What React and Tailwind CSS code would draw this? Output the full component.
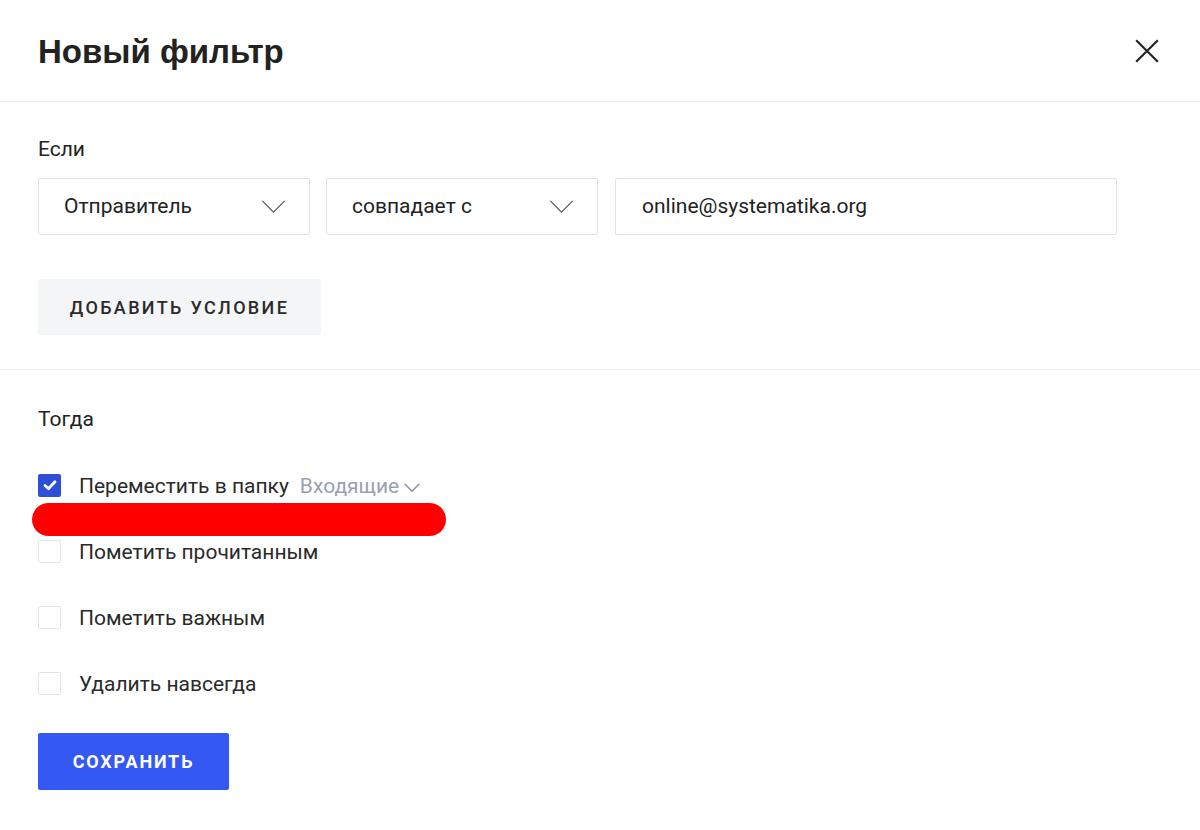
import React from 'react';

const Chevron = ({ className, width = 1.3 }) => (
  <svg className={className} viewBox="0 0 26 14" fill="none" stroke="currentColor" strokeWidth={width}>
    <path d="M1 1 L13 13 L25 1" />
  </svg>
);

const Select = ({ label, width }) => (
  <div className={`${width} h-[57px] border border-[#e1e2e6] rounded-[2px] flex items-center justify-between pl-[25px] pr-[23px]`}>
    <span className="text-[21px] text-[#222]">{label}</span>
    <Chevron className="w-[25px] h-[13px] text-[#555]" />
  </div>
);

const CheckRow = ({ checked, children }) => (
  <div className="flex items-center h-[24px]">
    {checked ? (
      <div className="w-[23px] h-[23px] rounded-[2px] bg-[#2f4fd6] flex items-center justify-center">
        <svg viewBox="0 0 16 16" className="w-[16px] h-[16px]" fill="none" stroke="white" strokeWidth="2.8" strokeLinecap="round" strokeLinejoin="round">
          <path d="M3 8.5 L6.5 11.8 L13 4.8" />
        </svg>
      </div>
    ) : (
      <div className="w-[23px] h-[23px] rounded-[2px] border border-[#e3e4e8] bg-white" />
    )}
    <div className="ml-[18px] pt-[3px] text-[21px] text-[#2a2a2a] flex items-center">{children}</div>
  </div>
);

export default function App() {
  return (
    <div className="w-[1200px] h-[830px] bg-white font-['Roboto',sans-serif] relative overflow-hidden">
      {/* Шапка */}
      <div className="h-[102px] border-b border-[#ececec] flex items-center justify-between pl-[38px] pr-[40px]">
        <h1 className="font-['Liberation_Sans',Arial,sans-serif] font-bold text-[33px] text-[#222] pt-[2px]">Новый фильтр</h1>
        <svg viewBox="0 0 24 24" className="w-[26px] h-[26px]" fill="none" stroke="#222" strokeWidth="2">
          <path d="M2 2 L22 22 M22 2 L2 22" />
        </svg>
      </div>

      {/* Условия */}
      <div className="border-b border-[#ececec] pl-[38px] pt-[34px] pb-[34px]">
        <div className="text-[21px] text-[#222] leading-[26px]">Если</div>
        <div className="flex mt-[16px]">
          <Select label="Отправитель" width="w-[272px]" />
          <div className="ml-[16px]"><Select label="совпадает с" width="w-[272px]" /></div>
          <div className="ml-[17px] w-[502px] h-[57px] border border-[#e1e2e6] rounded-[2px] flex items-center pl-[26px]">
            <span className="text-[21px] text-[#222]">online@systematika.org</span>
          </div>
        </div>
        <button className="mt-[44px] w-[283px] h-[56px] bg-[#f4f5f7] rounded-[2px] text-[18px] font-medium tracking-[0.13em] text-[#2a2a2a]">
          ДОБАВИТЬ УСЛОВИЕ
        </button>
      </div>

      {/* Действия */}
      <div className="pl-[38px] pt-[36px]">
        <div className="text-[21px] text-[#222] leading-[26px]">Тогда</div>
        <div className="mt-[41px] flex flex-col gap-[42px]">
          <CheckRow checked>
            <span>Переместить в папку</span>
            <span className="ml-[11px] text-[#9aa0b3]">Входящие</span>
            <Chevron className="ml-[5px] mt-[2px] w-[16px] h-[9px] text-[#8d93a6]" width={2.6} />
          </CheckRow>
          <CheckRow>Пометить прочитанным</CheckRow>
          <CheckRow>Пометить важным</CheckRow>
          <CheckRow>Удалить навсегда</CheckRow>
        </div>
        <button className="mt-[38px] w-[191px] h-[57px] bg-[#3358f4] rounded-[2px] text-white text-[18px] font-bold tracking-[0.1em]">
          СОХРАНИТЬ
        </button>
      </div>

      {/* Пометка поверх */}
      <div className="absolute left-[32px] top-[503px] w-[414px] h-[33px] rounded-full bg-[#ff0000]" />
    </div>
  );
}
